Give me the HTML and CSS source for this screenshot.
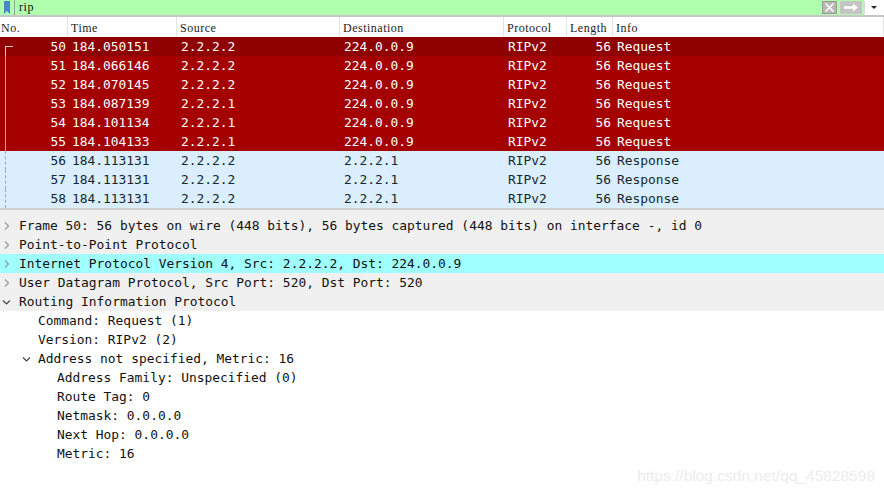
FILE: index.html
```html
<!DOCTYPE html>
<html>
<head>
<meta charset="utf-8">
<link rel="stylesheet" href="styles.css">
</head>
<body>
<div class="filter">
  <svg class="bm" width="14" height="15" viewBox="0 0 14 15"><path d="M3 1h6v13l-3-3-3 3z" fill="#4a86c8"/><line x1="13.5" y1="0" x2="13.5" y2="15" stroke="#8aa88a"/></svg>
  <span class="ftext">rip</span>
  <span class="fspace"></span>
  <svg class="clear" width="15" height="13" viewBox="0 0 15 13"><rect x="0.5" y="0.5" width="14" height="12" fill="#b8b8b8" stroke="#999"/><path d="M3.5 2.5l8 8M11.5 2.5l-8 8" stroke="#fff" stroke-width="1.6"/></svg>
  <svg class="apply" width="22" height="13" viewBox="0 0 22 13"><rect x="0" y="0" width="22" height="13" rx="1" fill="#c4c4c4"/><path d="M4 5.2h9V2.5l5 4-5 4V7.8H4z" fill="#fff"/></svg>
  <svg class="drop" width="20" height="15" viewBox="0 0 20 15"><line x1="0.5" y1="1" x2="0.5" y2="14" stroke="#d8d8d8"/><path d="M7 6h6l-3 3z" fill="#222"/></svg>
</div>
<div class="plist">
  <div class="row head">
    <div class="c">No.</div><div class="c">Time</div><div class="c">Source</div><div class="c">Destination</div><div class="c">Protocol</div><div class="c">Length</div><div class="c">Info</div>
  </div>
  <div class="row red sel"><div class="c num"><span class="mk first"></span>50</div><div class="c">184.050151</div><div class="c">2.2.2.2</div><div class="c">224.0.0.9</div><div class="c">RIPv2</div><div class="c len">56</div><div class="c">Request</div></div>
  <div class="row red"><div class="c num"><span class="mk mid"></span>51</div><div class="c">184.066146</div><div class="c">2.2.2.2</div><div class="c">224.0.0.9</div><div class="c">RIPv2</div><div class="c len">56</div><div class="c">Request</div></div>
  <div class="row red"><div class="c num"><span class="mk mid"></span>52</div><div class="c">184.070145</div><div class="c">2.2.2.2</div><div class="c">224.0.0.9</div><div class="c">RIPv2</div><div class="c len">56</div><div class="c">Request</div></div>
  <div class="row red"><div class="c num"><span class="mk mid"></span>53</div><div class="c">184.087139</div><div class="c">2.2.2.1</div><div class="c">224.0.0.9</div><div class="c">RIPv2</div><div class="c len">56</div><div class="c">Request</div></div>
  <div class="row red"><div class="c num"><span class="mk mid"></span>54</div><div class="c">184.101134</div><div class="c">2.2.2.1</div><div class="c">224.0.0.9</div><div class="c">RIPv2</div><div class="c len">56</div><div class="c">Request</div></div>
  <div class="row red"><div class="c num"><span class="mk mid"></span>55</div><div class="c">184.104133</div><div class="c">2.2.2.1</div><div class="c">224.0.0.9</div><div class="c">RIPv2</div><div class="c len">56</div><div class="c">Request</div></div>
  <div class="row blue"><div class="c num"><span class="mk dash"></span>56</div><div class="c">184.113131</div><div class="c">2.2.2.2</div><div class="c">2.2.2.1</div><div class="c">RIPv2</div><div class="c len">56</div><div class="c">Response</div></div>
  <div class="row blue"><div class="c num"><span class="mk dash"></span>57</div><div class="c">184.113131</div><div class="c">2.2.2.2</div><div class="c">2.2.2.1</div><div class="c">RIPv2</div><div class="c len">56</div><div class="c">Response</div></div>
  <div class="row blue"><div class="c num"><span class="mk dash"></span>58</div><div class="c">184.113131</div><div class="c">2.2.2.2</div><div class="c">2.2.2.1</div><div class="c">RIPv2</div><div class="c len">56</div><div class="c">Response</div></div>
</div>
<div class="splitter"></div>
<div class="details">
  <div class="d top"><span class="ar"><svg width="19" height="19" viewBox="0 0 19 19"><path d="M5 6.5l3.5 3.5L5 13.5" fill="none" stroke="#999" stroke-width="1.2"/></svg></span>Frame 50: 56 bytes on wire (448 bits), 56 bytes captured (448 bits) on interface -, id 0</div>
  <div class="d top"><span class="ar"><svg width="19" height="19" viewBox="0 0 19 19"><path d="M5 6.5l3.5 3.5L5 13.5" fill="none" stroke="#999" stroke-width="1.2"/></svg></span>Point-to-Point Protocol</div>
  <div class="d top hl"><span class="ar"><svg width="19" height="19" viewBox="0 0 19 19"><path d="M5 6.5l3.5 3.5L5 13.5" fill="none" stroke="#999" stroke-width="1.2"/></svg></span>Internet Protocol Version 4, Src: 2.2.2.2, Dst: 224.0.0.9</div>
  <div class="d top"><span class="ar"><svg width="19" height="19" viewBox="0 0 19 19"><path d="M5 6.5l3.5 3.5L5 13.5" fill="none" stroke="#999" stroke-width="1.2"/></svg></span>User Datagram Protocol, Src Port: 520, Dst Port: 520</div>
  <div class="d top"><span class="ar"><svg width="19" height="19" viewBox="0 0 19 19"><path d="M3 8.5l3.5 3.5L10 8.5" fill="none" stroke="#444" stroke-width="1.2"/></svg></span>Routing Information Protocol</div>
  <div class="d l1"><span class="ar"></span>Command: Request (1)</div>
  <div class="d l1"><span class="ar"></span>Version: RIPv2 (2)</div>
  <div class="d l1"><span class="ar"><svg width="19" height="19" viewBox="0 0 19 19"><path d="M4 8.5l3.5 3.5L11 8.5" fill="none" stroke="#444" stroke-width="1.2"/></svg></span>Address not specified, Metric: 16</div>
  <div class="d l2"><span class="ar"></span>Address Family: Unspecified (0)</div>
  <div class="d l2"><span class="ar"></span>Route Tag: 0</div>
  <div class="d l2"><span class="ar"></span>Netmask: 0.0.0.0</div>
  <div class="d l2"><span class="ar"></span>Next Hop: 0.0.0.0</div>
  <div class="d l2"><span class="ar"></span>Metric: 16</div>
  <div class="watermark">https://blog.csdn.net/qq_45828598</div>
</div>
</body>
</html>
```
FILE: styles.css
```css
html, body { margin: 0; padding: 0; background: #fff; }
body { width: 884px; height: 492px; overflow: hidden; font-family: "DejaVu Sans Mono", "Liberation Mono", monospace; }

.filter {
  height: 15px;
  background: #afffaf;
  border-bottom: 2px solid #c6c6c6;
  display: flex;
  align-items: center;
}
.filter .bm { flex: none; margin-left: 1px; }
.ftext { font-family: "Liberation Serif", serif; font-size: 12px; margin-left: 4px; letter-spacing: 0.6px; color: #111; }
.fspace { flex: 1; }
.clear { flex: none; margin-right: 3px; }
.apply { flex: none; margin-right: 2px; }
.drop { flex: none; margin-right: 0; background: #fff; height: 15px; }

.row {
  display: grid;
  grid-template-columns: 68px 109px 163px 164px 63px 46px 1fr;
  height: 19px;
  font-size: 12.9px;
  line-height: 19px;
  white-space: nowrap;
}
.row .c { padding-left: 4px; overflow: hidden; }
.row .num, .row .len { text-align: right; padding-left: 0; padding-right: 2px; position: relative; }
.row.head {
  height: 20px;
  line-height: 22px;
  font-family: "Liberation Serif", serif;
  font-size: 12px;
  letter-spacing: 0.5px;
  color: #222;
  background: #fff;
}
.row.head .c { border-right: 1px solid #e4e4e4; padding-left: 3px; }
.row.head .c:first-child { padding-left: 1px; }
.row.red { background: #a40000; color: #fff; }
.row.red.sel { background: #8f0000; }
.row.blue { background: #daeefe; color: #12272e; }

.mk { position: absolute; left: 5px; top: 0; width: 7px; height: 19px; }
.mk.first { top: 9px; height: 10px; border-left: 1px solid #e8c4c4; border-top: 1px solid #e8c4c4; }
.mk.mid { border-left: 1px solid #d8a0a0; }
.mk.dash { border-left: 1px dashed #9aa8b4; }

.splitter {
  height: 8px;
  background: #f0f0f0;
  border-top: 2px solid #d0d0d0;
  box-sizing: border-box;
}

.details { position: relative; height: 276px; background: #fff; }
.d {
  height: 19px;
  line-height: 19px;
  font-size: 12.9px;
  color: #111;
  white-space: nowrap;
  display: flex;
}
.d.top { background: #f0f0f0; }
.d.hl { background: #a0ffff; }
.ar { display: block; width: 19px; height: 19px; flex: none; }
.ar svg { display: block; }
.d.l1 { padding-left: 19px; }
.d.l2 { padding-left: 38px; }

.watermark {
  position: absolute;
  right: 9px;
  bottom: 7px;
  font-family: "Liberation Sans", Arial, sans-serif;
  font-size: 15.5px;
  color: #ececec;
}
```
